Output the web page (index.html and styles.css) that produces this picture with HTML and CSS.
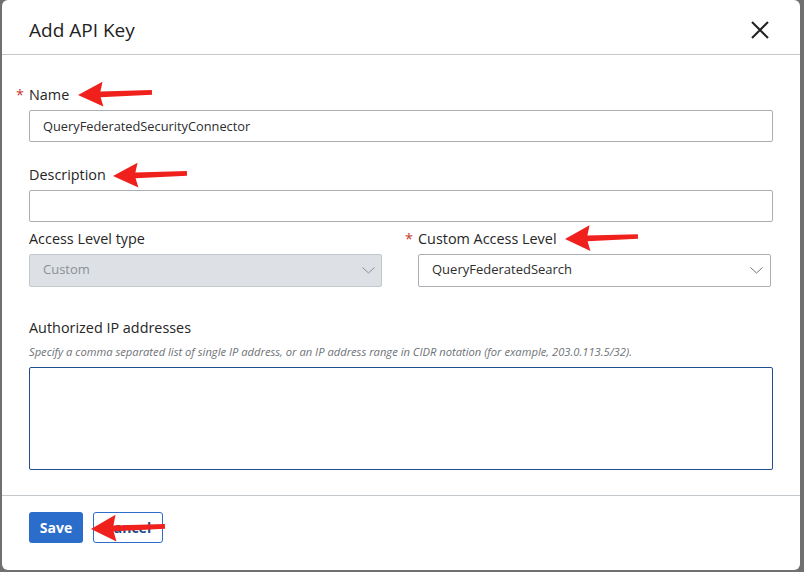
FILE: index.html
```html
<!DOCTYPE html>
<html>
<head>
<meta charset="utf-8">
<link rel="stylesheet" href="styles.css">
</head>
<body>
<div class="page">
  <div class="dialog">
    <div class="header">
      <div class="title">Add API Key</div>
      <svg class="close" width="18" height="18" viewBox="0 0 18 18"><path d="M1 1 L17 17 M17 1 L1 17" stroke="#222" stroke-width="2" fill="none"/></svg>
    </div>
    <div class="body">
      <div class="label label-name"><span class="req">*</span>Name</div>
      <div class="input">QueryFederatedSecurityConnector</div>
      <div class="label label-desc">Description</div>
      <div class="input"></div>
      <div class="cols">
        <div class="col">
          <div class="label label-type">Access Level type</div>
          <div class="select disabled"><span>Custom</span><svg width="13" height="7" viewBox="0 0 13 7"><path d="M0.5 0.5 L6.5 6 L12.5 0.5" stroke="#8a8f95" stroke-width="1" fill="none"/></svg></div>
        </div>
        <div class="col">
          <div class="label label-type"><span class="req">*</span>Custom Access Level</div>
          <div class="select"><span>QueryFederatedSearch</span><svg width="13" height="7" viewBox="0 0 13 7"><path d="M0.5 0.5 L6.5 6 L12.5 0.5" stroke="#6f747a" stroke-width="1" fill="none"/></svg></div>
        </div>
      </div>
      <div class="label label-ip">Authorized IP addresses</div>
      <div class="hint">Specify a comma separated list of single IP address, or an IP address range in CIDR notation (for example, 203.0.113.5/32).</div>
      <div class="textarea"></div>
    </div>
    <div class="footer">
      <div class="btn primary">Save</div>
      <div class="btn secondary">Cancel</div>
    </div>
    <svg class="arrows" width="798" height="570" viewBox="2 0 798 570">
      <g fill="#f0201c">
        <polygon transform="translate(78,95) rotate(-2)" points="0,0 25,-12.5 22.5,-2.6 74,-2.3 74,2.3 22.5,3 25,12.5"/>
        <polygon transform="translate(113,176) rotate(-2)" points="0,0 25,-12.5 22.5,-2.6 74,-2.3 74,2.3 22.5,3 25,12.5"/>
        <polygon transform="translate(565,239) rotate(-2)" points="0,0 25,-13 22.5,-2.6 73,-2.3 73,2.3 22.5,3 25,13"/>
        <polygon transform="translate(91,529) rotate(-2)" points="0,0 25,-13.5 22.5,-2.6 74,-2.3 74,2.3 22.5,3 25,13.5"/>
      </g>
    </svg>
  </div>
</div>
</body>
</html>
```
FILE: styles.css
```css
html, body {
  margin: 0;
  padding: 0;
}
body {
  background: #707070;
  font-family: "Open Sans", "Liberation Sans", sans-serif;
  color: #2d2d2d;
}
.page {
  height: 572px;
  padding-left: 2px;
  display: flex;
  overflow: hidden;
}
.dialog {
  position: relative;
  width: 798px;
  height: 570px;
  background: #fff;
  border-radius: 6px;
  display: flex;
  flex-direction: column;
}
.header {
  height: 55px;
  box-sizing: border-box;
  padding: 18px 31px 0 27px;
  border-bottom: 1px solid #c3c8cc;
  display: flex;
  justify-content: space-between;
  align-items: flex-start;
}
.title {
  font-size: 19px;
  line-height: 24px;
  color: #222;
}
.close {
  margin-top: 3px;
}
.body {
  height: 440px;
  padding: 0 27px;
  display: flex;
  flex-direction: column;
}
.label {
  font-size: 14.4px;
  line-height: 20px;
  height: 20px;
  color: #262626;
}
.req {
  display: inline-block;
  width: 13px;
  margin-left: -13px;
  color: #c8372d;
}
.label-name { margin-top: 30px; }
.label-desc { margin-top: 23px; }
.label-type { margin-top: 7px; }
.label-ip { margin-top: 31px; }
.input {
  margin-top: 5px;
  height: 32px;
  box-sizing: border-box;
  border: 1px solid #a9aeb3;
  border-radius: 2px;
  padding: 0 13px;
  font-size: 12.8px;
  line-height: 30px;
  color: #2d2d2d;
}
.cols {
  display: grid;
  grid-template-columns: 353px 353px;
  column-gap: 36px;
}
.select {
  margin-top: 5px;
  height: 33px;
  box-sizing: border-box;
  border: 1px solid #a9aeb3;
  border-radius: 2px;
  padding: 0 7px 3px 13px;
  font-size: 13px;
  display: flex;
  align-items: center;
  justify-content: space-between;
  color: #2d2d2d;
}
.select svg {
  margin-top: 3px;
}
.select.disabled {
  background: #dde1e5;
  border-color: #c3c8cd;
  color: #8b9096;
  padding-right: 6px;
}
.hint {
  margin-top: 7px;
  font-size: 11.2px;
  line-height: 14px;
  font-style: italic;
  color: #6d7277;
  white-space: nowrap;
}
.textarea {
  margin-top: 8px;
  height: 103px;
  box-sizing: border-box;
  border: 1px solid #1d4f91;
  border-radius: 2px;
}
.footer {
  border-top: 1px solid #c3c8cc;
  padding: 16px 27px 0;
  display: flex;
  gap: 10px;
}
.btn {
  height: 31px;
  box-sizing: border-box;
  border-radius: 3px;
  font-size: 14px;
  font-weight: 700;
  display: flex;
  align-items: center;
  justify-content: center;
}
.primary {
  width: 54px;
  background: #2b6dcb;
  color: #fff;
}
.secondary {
  width: 70px;
  background: #fff;
  border: 1px solid #2b6dcb;
  color: #1f4a86;
}
.arrows {
  position: absolute;
  left: 0;
  top: 0;
  pointer-events: none;
}
```
